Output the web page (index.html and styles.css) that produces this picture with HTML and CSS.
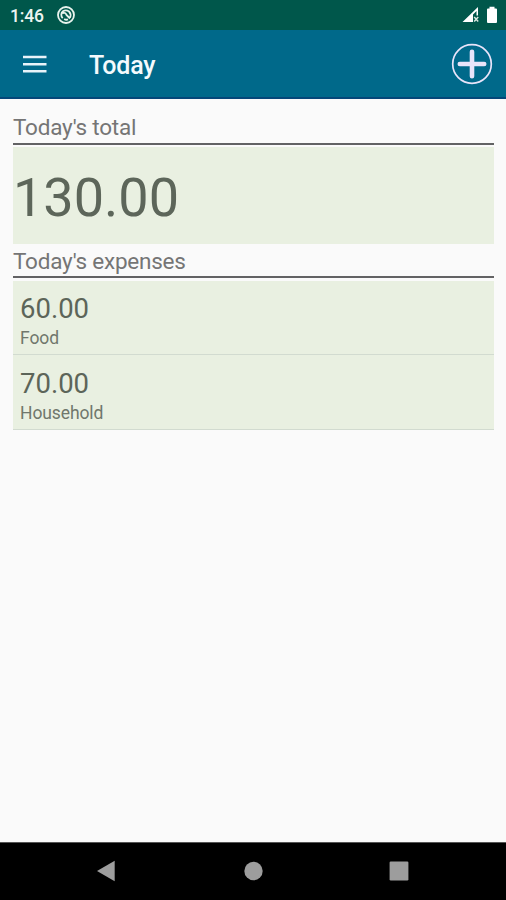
FILE: index.html
```html
<!DOCTYPE html>
<html lang="en">
<head>
<meta charset="utf-8">
<title>Today</title>
<link rel="stylesheet" href="styles.css">
</head>
<body>
<div class="status">
  <span class="clock">1:46</span>
  <svg class="notice" width="20" height="20" viewBox="0 0 20 20" fill="none" stroke="#e8f3ed">
    <circle cx="10" cy="10" r="8" stroke-width="1.8"/>
    <path d="M6.7 13.2A4.7 4.7 0 0 1 7 6.2Q10 4.4 13 6.4Q15.6 9.5 14 12.5M6.5 8.2Q9.5 7 10.5 10L14 13.5M8.2 14Q10 15.2 12 14.4" stroke-width="1.8"/>
  </svg>
  <svg class="signal" width="18" height="18" viewBox="0 0 18 18">
    <path d="M.5 16L16 1v8.5h-1.5V5L11 8.5V16z" fill="#fff"/>
    <path d="M12.2 11l4 4.5m0-4.500l-4 4.500" stroke="#d7e8df" stroke-width="1.5"/>
  </svg>
  <svg class="battery" width="12" height="18" viewBox="0 0 12 18">
    <path d="M3.5 .8h5v1.7H10q1 0 1 1V16q0 1-1 1H2q-1 0-1-1V3.500q0-1 1-1h1.500z" fill="#fff"/>
  </svg>
</div>
<header class="bar">
  <svg class="menu" width="24" height="18" viewBox="0 0 24 18"><path d="M0 2h23.5M0 9.2h23.5M0 16.3h23.5" stroke="#e8f3fa" stroke-width="2.6"/></svg>
  <h1 class="title">Today</h1>
  <svg class="add" width="42" height="42" viewBox="0 0 42 42" fill="none" stroke="#e8e4fa">
    <circle cx="21" cy="21" r="19.3" stroke-width="1.7"/>
    <path d="M21 8.8v24.4M8.8 21h24.4" stroke-width="4.6" stroke-linecap="round"/>
  </svg>
</header>
<main class="content">
  <h2 class="label">Today's total</h2>
  <div class="total">130.00</div>
  <h2 class="label second">Today's expenses</h2>
  <ul class="list">
    <li class="item"><span class="amount">60.00</span><span class="kind">Food</span></li>
    <li class="item"><span class="amount">70.00</span><span class="kind">Household</span></li>
  </ul>
</main>
<nav class="nav">
  <svg width="20" height="22" viewBox="0 0 20 22"><path d="M1 11L18.7 .7v20.6z" fill="#9d9d9d"/></svg>
  <svg width="20" height="22" viewBox="0 0 20 22"><circle cx="10.5" cy="11" r="9.2" fill="#9d9d9d"/></svg>
  <svg width="20" height="22" viewBox="0 0 20 22"><rect x=".6" y="1.5" width="18.8" height="19" rx="1.2" fill="#9d9d9d"/></svg>
</nav>
</body>
</html>
```
FILE: styles.css
```css
* { box-sizing: border-box; }
body {
  margin: 0;
  height: 900px;
  display: flex;
  flex-direction: column;
  overflow: hidden;
  background: #fafafa;
  font-family: Roboto, sans-serif;
}
svg { display: block; flex: none; }
.status {
  height: 30px;
  flex: none;
  display: flex;
  align-items: center;
  padding: 0 8px 0 10px;
  background: #00574b;
  color: #edf5f1;
}
.clock { width: 46px; font-size: 17.5px; font-weight: 500; line-height: 30px; padding-top: 2px; letter-spacing: -.15px; }
.signal { margin-left: auto; }
.battery { margin-left: 6px; }
.bar {
  height: 69px;
  flex: none;
  display: flex;
  align-items: center;
  padding: 0 13px 0 23px;
  background: #00698a;
  border-bottom: 2px solid #054779;
  color: #f4fafd;
}
.title { margin: 5px 0 0 42px; font-size: 25px; font-weight: 500; line-height: 32px; letter-spacing: -.2px; }
.add { margin-left: auto; margin-top: 1px; }
.content { flex: 1; padding: 13px 12px 0 13px; color: #757575; }
.label {
  margin: 0;
  height: 33px;
  padding-top: 1px;
  border-bottom: 2px solid #626264;
  font-size: 22.5px;
  font-weight: 400;
  line-height: 28px;
  letter-spacing: -.22px;
}
.total {
  height: 97px;
  margin-top: 2px;
  background: #e9f0e1;
  color: #5d665a;
  font-size: 54px;
  line-height: 102px;
}
.second { height: 34px; padding-top: 3px; }
.list { margin: 3px 0 0; padding: 0; list-style: none; }
.item {
  height: 75px;
  display: flex;
  flex-direction: column;
  padding: 11px 8px 0 7px;
  background: #e9f0e1;
  border-bottom: 1px solid #d2dbd0;
}
.item:first-child { height: 74px; padding-top: 10px; }
.amount { color: #5c6559; font-size: 27.5px; line-height: 36px; }
.kind { color: #70776c; font-size: 17.5px; line-height: 22px; letter-spacing: -.1px; }
.nav {
  height: 58px;
  flex: none;
  display: flex;
  justify-content: space-between;
  align-items: center;
  padding: 0 97px 2px 96px;
  background: #000;
  border-top: 1px solid #555;
}
```
